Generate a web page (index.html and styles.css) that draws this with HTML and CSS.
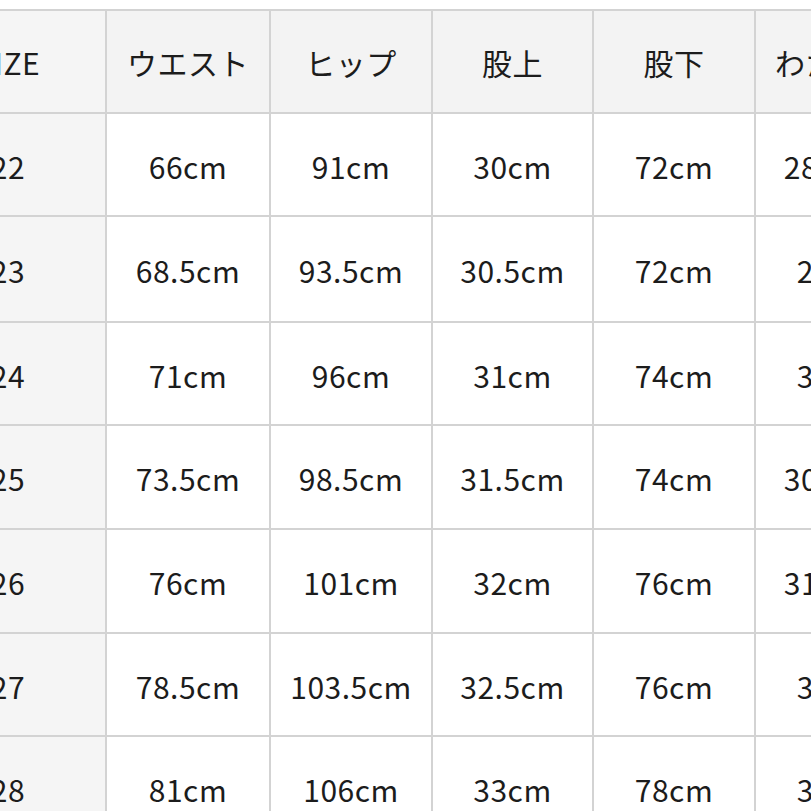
FILE: index.html
```html
<!DOCTYPE html>
<html lang="ja">
<head>
<meta charset="utf-8">
<title>サイズ表</title>
<link rel="stylesheet" href="styles.css">
</head>
<body>
<div class="sheet">
  <div class="size-table">
    <div class="cell head first">SIZE</div>
    <div class="cell head">ウエスト</div>
    <div class="cell head">ヒップ</div>
    <div class="cell head">股上</div>
    <div class="cell head">股下</div>
    <div class="cell head">わたり幅</div>

    <div class="cell first">22</div>
    <div class="cell">66cm</div>
    <div class="cell">91cm</div>
    <div class="cell">30cm</div>
    <div class="cell">72cm</div>
    <div class="cell">28.5cm</div>

    <div class="cell first">23</div>
    <div class="cell">68.5cm</div>
    <div class="cell">93.5cm</div>
    <div class="cell">30.5cm</div>
    <div class="cell">72cm</div>
    <div class="cell">29cm</div>

    <div class="cell first">24</div>
    <div class="cell">71cm</div>
    <div class="cell">96cm</div>
    <div class="cell">31cm</div>
    <div class="cell">74cm</div>
    <div class="cell">30cm</div>

    <div class="cell first">25</div>
    <div class="cell">73.5cm</div>
    <div class="cell">98.5cm</div>
    <div class="cell">31.5cm</div>
    <div class="cell">74cm</div>
    <div class="cell">30.5cm</div>

    <div class="cell first">26</div>
    <div class="cell">76cm</div>
    <div class="cell">101cm</div>
    <div class="cell">32cm</div>
    <div class="cell">76cm</div>
    <div class="cell">31.5cm</div>

    <div class="cell first">27</div>
    <div class="cell">78.5cm</div>
    <div class="cell">103.5cm</div>
    <div class="cell">32.5cm</div>
    <div class="cell">76cm</div>
    <div class="cell">32cm</div>

    <div class="cell first">28</div>
    <div class="cell">81cm</div>
    <div class="cell">106cm</div>
    <div class="cell">33cm</div>
    <div class="cell">78cm</div>
    <div class="cell">33cm</div>
  </div>
</div>
</body>
</html>
```

FILE: styles.css
```css
html, body {
  margin: 0;
  padding: 0;
  background: #ffffff;
}

body {
  width: 811px;
  height: 811px;
  overflow: hidden;
  font-family: "Noto Sans CJK JP", "Noto Sans", sans-serif;
  color: #1c1c1c;
}

.sheet {
  padding-top: 9px;
  margin-left: -89px;
}

.size-table {
  display: grid;
  grid-template-columns: 194px 162px 160px 159px 160px 160px;
  grid-template-rows: 101px 101px 104px 101px 102px 102px 101px 102px;
  gap: 2px;
  padding: 2px 0 0 0;
  width: max-content;
  background: #d3d3d3;
}

.cell {
  display: flex;
  align-items: center;
  justify-content: center;
  padding-top: 2px;
  box-sizing: border-box;
  background: #ffffff;
  font-size: 30px;
  letter-spacing: 0.5px;
  white-space: nowrap;
}

.head {
  background: #f3f3f3;
  padding-top: 0;
}

.first {
  background: #f5f5f5;
}
```
